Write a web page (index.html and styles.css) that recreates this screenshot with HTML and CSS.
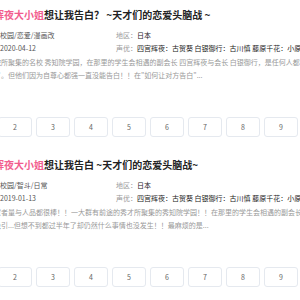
FILE: index.html
```html
<!DOCTYPE html>
<html lang="zh-CN">
<head>
    <meta charset="UTF-8">
    <title>番剧搜索</title>
    <link rel="stylesheet" href="styles.css">
</head>
<body>
    <div class="page">
        <div class="card">
            <div class="info">
                <h3 class="title"><span class="keyword">辉夜大小姐</span>想让我告白？ ~天才们的恋爱头脑战 ~</h3>
                <div class="meta">
                    <div class="meta-left">
                        <p>校园/恋爱/漫画改</p>
                        <p>2020-04-12</p>
                    </div>
                    <div class="meta-right">
                        <p><span class="label">地区：</span>日本</p>
                        <p><span class="label">声优：</span>四宫辉夜：古贺葵 白银御行：古川慎 藤原千花：小原好美 石上优：铃木崚汰</p>
                    </div>
                </div>
                <p class="desc">院所聚集的名校 秀知院学园，在那里的学生会相遇的副会长 四宫辉夜与会长 白银御行，是任何人都认可的一对，两人早就互相吸引<br>了。但他们因为自尊心都强一直没能告白！！在"如何让对方告白"...</p>
            </div>
            <div class="eps">
                <a class="ep">1</a><a class="ep">2</a><a class="ep">3</a><a class="ep">4</a><a class="ep">5</a><a class="ep">6</a><a class="ep">7</a><a class="ep">8</a><a class="ep">9</a>
            </div>
        </div>

        <div class="card">
            <div class="info">
                <h3 class="title"><span class="keyword">辉夜大小姐</span>想让我告白 ~天才们的恋爱头脑战~</h3>
                <div class="meta">
                    <div class="meta-left">
                        <p>校园/智斗/日常</p>
                        <p>2019-01-13</p>
                    </div>
                    <div class="meta-right">
                        <p><span class="label">地区：</span>日本</p>
                        <p><span class="label">声优：</span>四宫辉夜：古贺葵 白银御行：古川慎 藤原千花：小原好美</p>
                    </div>
                </div>
                <p class="desc">家者量与人品都很棒！！一大群有前途的秀才所聚集的秀知院学园！！在那里的学生会相遇的副会长与会长，两人互相<br>吸引...但想不到都过半年了却仍然什么事情也没发生！！最麻烦的是...</p>
            </div>
            <div class="eps">
                <a class="ep">1</a><a class="ep">2</a><a class="ep">3</a><a class="ep">4</a><a class="ep">5</a><a class="ep">6</a><a class="ep">7</a><a class="ep">8</a><a class="ep">9</a>
            </div>
        </div>
    </div>
</body>
</html>
```

FILE: styles.css
```css
body {
    margin: 0;
    background: #ffffff;
    font-family: "Noto Sans CJK SC", "Noto Sans", sans-serif;
    overflow: hidden;
}

.page {
    margin-left: -40px;
    width: 420px;
}

.card {
    height: 150px;
}

.info {
    padding-left: 34px;
    padding-top: 7px;
}

p {
    margin: 0;
}

/* title */
.title {
    margin: 0;
    font-size: 10px;
    line-height: 16px;
    font-weight: bold;
    color: #222;
    white-space: nowrap;
}

.title .keyword {
    color: #f25d8e;
}

/* meta rows */
.meta {
    display: flex;
    margin-top: 6px;
    font-size: 7px;
    line-height: 13px;
    white-space: nowrap;
}

.meta-left {
    width: 116px;
    padding-left: 6px;
    color: #555;
}

.meta-right {
    color: #222;
}

.label {
    color: #999;
}

.desc {
    margin-top: 1px;
    font-size: 7px;
    line-height: 13px;
    color: #999;
    white-space: nowrap;
}

/* episode buttons */
.eps {
    display: flex;
    gap: 4px;
    margin-top: 35px;
}

.ep {
    flex: none;
    width: 32px;
    height: 18px;
    border: 1px solid #e5e9ef;
    border-radius: 3px;
    font-size: 7px;
    line-height: 18px;
    text-align: center;
    color: #666;
}
```
